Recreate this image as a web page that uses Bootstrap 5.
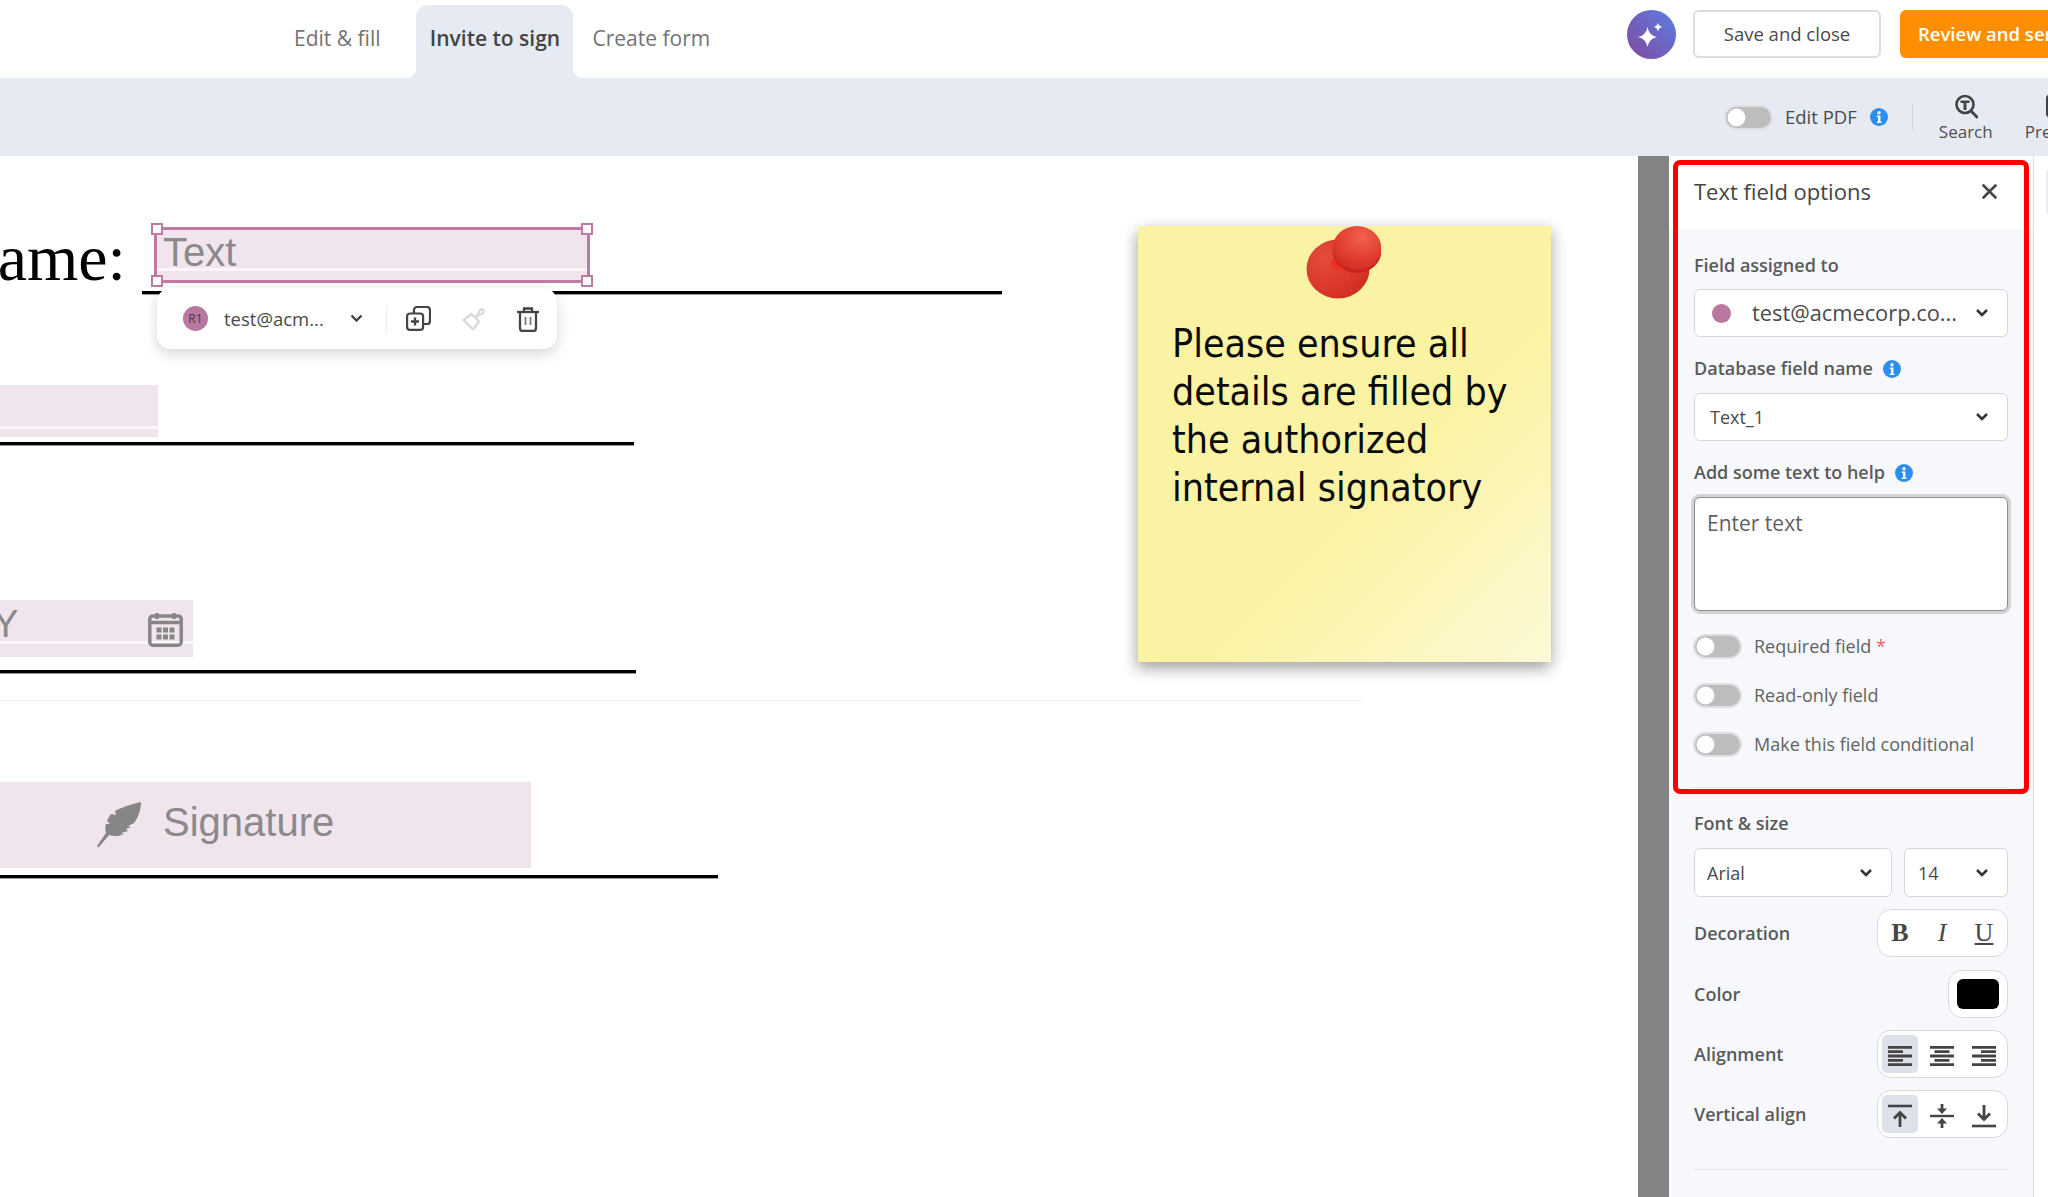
<!DOCTYPE html>
<html lang="en">
<head>
  <meta charset="UTF-8">
  <meta name="viewport" content="width=device-width, initial-scale=1">
  <title>Text field options</title>
  <link href="https://cdn.jsdelivr.net/npm/bootstrap@5.3.0/dist/css/bootstrap.min.css" rel="stylesheet">
  <style>
    body { font-family: "Open Sans", sans-serif; color: #4a4a4a; background: #fff; }
    .app { width: 2048px; height: 1197px; overflow: hidden; }

    /* top bar */
    .topbar { height: 78px; padding-left: 282px; flex-shrink: 0; }
    .doc-tabs { height: 73px; margin-top: 5px; }
    .doc-tabs .nav-link { font-size: 21px; color: #737373; padding: 0 12px; height: 73px; line-height: 66px; position: relative; }
    .doc-tabs .tab-active { color: #444; font-weight: 600; background: #e6eaf2; border-radius: 12px 12px 0 0; width: 157px; text-align: center; padding: 0; margin: 0 7px 0 24px; white-space: nowrap; }
    .doc-tabs .tab-active::before,
    .doc-tabs .tab-active::after { content: ""; position: absolute; bottom: 0; width: 10px; height: 10px; }
    .doc-tabs .tab-active::before { left: -10px; background: radial-gradient(circle at 0 0, transparent 10px, #e6eaf2 10.5px); }
    .doc-tabs .tab-active::after { right: -10px; background: radial-gradient(circle at 100% 0, transparent 10px, #e6eaf2 10.5px); }
    .top-actions { padding-bottom: 10px; }
    .ai-btn { width: 49px; height: 49px; flex-shrink: 0; }
    .btn-save { width: 188px; height: 48px; margin-left: 17px; font-size: 18.5px; font-weight: 500; color: #4a4a4a; background: #fff; border: 2px solid #dcdcdc; border-radius: 6px; padding: 0; }
    .btn-review { width: 180px; height: 48px; margin: 0 -32px 0 19px; font-size: 18.5px; font-weight: 600; color: #fff; background: #ff8f00; border: 0; border-radius: 6px; padding: 0 0 0 18px; flex-shrink: 0; text-align: left; white-space: nowrap; }

    /* tool strip */
    .toolstrip { height: 78px; background: #e6eaf2; padding-left: 1725px; flex-shrink: 0; }
    .toolstrip > * { flex-shrink: 0; }
    .edit-pdf { font-size: 18.5px; font-weight: 500; color: #4a4a4a; margin-left: 12px; white-space: nowrap; }
    .toolstrip .info-icon { margin-left: 13px; }
    .strip-sep { width: 1px; height: 26px; background: #d0d4dc; margin: 0 26px 0 24px; }
    .strip-item { font-size: 17px; font-weight: 500; color: #4f4f4f; line-height: 20px; width: 54px; margin-top: 2px; white-space: nowrap; }
    .strip-item svg { display: block; margin: 0 auto 3px; }
    .strip-cut { margin-left: 32px; }
    .strip-cut svg { margin-left: 21px; }

    /* switches */
    .form-switch .form-check-input { width: 49px; height: 25px; margin: 0 0 0 -1px; background-color: #bdbdbd; border: 2px solid #dedfe2; cursor: pointer; flex-shrink: 0;
      background-image: url("data:image/svg+xml,%3csvg xmlns='http://www.w3.org/2000/svg' viewBox='-4 -4 8 8'%3e%3ccircle r='3.4' fill='%23fff'/%3e%3c/svg%3e"); }
    .form-switch { padding-left: 0; min-height: 25px; margin: 0; }

    /* pdf canvas */
    .canvas { width: 1638px; height: 1041px; overflow: hidden; position: relative; flex-shrink: 0; }
    .pdf-text { position: absolute; left: -50px; top: 69px; font: 66px/1 "Liberation Serif", serif; color: #000; white-space: nowrap; }
    .pdf-line { position: absolute; height: 4px; background: #000; border-bottom: 1px solid #9a9a9a; }
    .line-1 { left: 142px; top: 135px; width: 860px; }
    .line-2 { left: 0; top: 286px; width: 634px; }
    .line-3 { left: 0; top: 514px; width: 636px; }
    .line-4 { left: 0; top: 719px; width: 718px; }
    .page-rule { position: absolute; left: 0; top: 544px; width: 1363px; height: 1px; background: #efefef; }
    .field { position: absolute; background: #f1e5ed; font-family: "Liberation Sans", sans-serif; color: #8c898b; }
    .field .strip { position: absolute; left: 0; right: 0; height: 3px; background: #fbf6f9; }
    .field-text { left: 154px; top: 71px; width: 436px; height: 56px; border: 3px solid #c07ba4; font-size: 40px; line-height: 44px; padding-left: 6px; }
    .field-text .strip { bottom: 9px; }
    .field-2 { left: 0; top: 229px; width: 158px; height: 52px; }
    .field-2 .strip { bottom: 8px; }
    .field-date { left: 0; top: 444px; width: 193px; height: 57px; font-size: 38px; line-height: 38px; padding-top: 5px; }
    .field-date .strip { bottom: 13px; }
    .field-date .year { display: block; margin-left: -7px; }
    .field-date svg { position: absolute; left: 148px; top: 12px; }
    .field-sign { left: 0; top: 626px; width: 531px; height: 86px; font-size: 40px; line-height: 80px; padding-left: 163px; }
    .field-sign svg { position: absolute; left: 97px; top: 20px; }
    .handle { position: absolute; width: 12px; height: 12px; background: #fff; border: 2.5px solid #c07ba4; }
    .h-tl { left: -6px; top: -7px; } .h-tr { right: -6px; top: -7px; }
    .h-bl { left: -6px; bottom: -7px; } .h-br { right: -6px; bottom: -7px; }
    .field-menu { position: absolute; left: 157px; top: 132px; width: 400px; height: 61px; padding-left: 26px; background: #fff; border-radius: 14px; box-shadow: 0 5px 14px rgba(0,0,0,.16); font-size: 18.5px; font-weight: 500; color: #4a4a4a; }
    .avatar { width: 25px; height: 25px; border-radius: 50%; background: #b9789f; font-size: 12px; color: #4a3542; line-height: 25px; text-align: center; }
    .menu-mail { width: 106px; margin-left: 16px; white-space: nowrap; }
    .menu-chev { margin-left: 20px; }
    .menu-sep { width: 1px; height: 26px; background: #ececec; margin: 0 19px 0 23px; }
    .menu-icon { margin-right: 31px; }
    .menu-trash { margin-left: -1px; }
    .sticky { position: absolute; left: 1138px; top: 70px; width: 413px; height: 436px; padding: 94px 20px 0 34px; background: linear-gradient(135deg, #fbf3a4 0%, #fbf3a4 60%, #fcf9d6 100%); box-shadow: -2px 7px 14px rgba(0,0,0,.3), 5px 2px 14px rgba(0,0,0,.1); font: 39px/48px "DejaVu Sans Condensed", "DejaVu Sans", sans-serif; color: #0b0b06; }
    .sticky svg { position: absolute; left: 167px; top: 0; }

    /* side panel */
    .gray-strip { width: 31px; background: #838383; flex-shrink: 0; }
    .side-panel { width: 365px; flex-shrink: 0; background: #f6f8fb; border-right: 1px solid #dcdde0; position: relative; }
    .panel-head { height: 73px; background: #fff; padding: 0 36px 2px 25px; }
    .panel-title { font-size: 22px; font-weight: 500; color: #444; margin: 0; }
    .panel-body { padding: 0 25px; }
    .lbl { display: block; font-size: 18px; font-weight: 600; color: #5a5a5a; line-height: 24px; margin: 0; }
    .lbl .info-icon { margin-left: 5px; vertical-align: -3px; }
    .form-select.fld { height: 48px; font-size: 18px; font-weight: 500; color: #4a4a4a; border: 1px solid #d5d7db; border-radius: 6px; padding: 0 36px 0 15px; line-height: 46px; background-position: right 18px center; background-size: 14px 10px;
      background-image: url("data:image/svg+xml,%3csvg xmlns='http://www.w3.org/2000/svg' viewBox='0 0 14 10'%3e%3cpath fill='none' stroke='%23333' stroke-width='2.6' d='M2 2l5 5 5-5'/%3e%3c/svg%3e"); }
    .form-select.assign { font-size: 21.8px; padding-left: 17px; padding-right: 30px; gap: 21px; white-space: nowrap; }
    .assign .dot { width: 19px; height: 19px; border-radius: 50%; background: #b9789f; flex-shrink: 0; }
    .form-select.arial { width: 198px; flex: none; padding-left: 12px; height: 49px; }
    .form-select.size { width: 104px; flex: none; padding-left: 13px; height: 49px; }
    .form-control.help { height: 114px; font-size: 21px; color: #555; border: 1px solid #8d8d8d; border-radius: 6px; padding: 10px 12px; box-shadow: 0 0 0 3px #d2d3d6; resize: none; background: #fff; }
    .form-control.help::placeholder { color: #5f5f5f; opacity: 1; }
    .sw-label { font-size: 18px; color: #636363; margin-left: 12px; line-height: 25px; }
    .req { color: #f0625f; }
    .side-rule { height: 1px; background: #e4e6ea; }
    .tool-group { width: 131px; height: 48px; background: #fff; border: 1px solid #d8dade; border-radius: 14px; padding: 0 4px; gap: 6px; }
    .tool-btn { width: 36px; height: 38px; padding: 0; border: 0; border-radius: 5px; color: #474747; background: transparent; font: 26px/38px "Liberation Serif", serif; }
    .tool-btn.on { background: #dde1ea; }
    .color-box { width: 60px; height: 48px; background: #fff; border: 1px solid #d8dade; border-radius: 14px; }
    .color-box span { width: 42px; height: 30px; background: #000; border-radius: 6px; }
    .mt-12 { margin-top: 12px; } .mt-13 { margin-top: 13px; } .mt-19 { margin-top: 19px; } .mt-23 { margin-top: 23px; } .mt-24 { margin-top: 24px; } .mt-30 { margin-top: 30px; } .mt-31 { margin-top: 31px; }
    .red-frame { position: absolute; left: 4px; top: 4px; width: 356px; height: 634px; border: 5px solid #ff0000; border-radius: 7px; pointer-events: none; }
    .rail { flex: 1; position: relative; }
    .rail::before { content: ""; position: absolute; left: 12px; top: 14px; width: 6px; height: 44px; background: #eceef2; border-radius: 4px; }
  </style>
</head>
<body>
  <div class="app d-flex flex-column">
    <!-- top bar -->
    <header class="topbar d-flex align-items-center">
      <ul class="nav doc-tabs align-self-start">
        <li class="nav-item"><a class="nav-link" href="#">Edit &amp; fill</a></li>
        <li class="nav-item"><a class="nav-link tab-active" href="#">Invite to sign</a></li>
        <li class="nav-item"><a class="nav-link" href="#">Create form</a></li>
      </ul>
      <div class="top-actions ms-auto d-flex align-items-center">
        <svg class="ai-btn" viewBox="0 0 49 49">
          <defs><linearGradient id="aiGrad" x1="0" y1="1" x2="1" y2="0"><stop offset="0" stop-color="#83499f"/><stop offset="1" stop-color="#5a7de4"/></linearGradient></defs>
          <circle cx="24.500" cy="24.500" r="24.500" fill="url(#aiGrad)"/>
          <path d="M20.500 17Q22 25.500 30 27Q22 28.500 20.500 37Q19 28.500 11 27Q19 25.500 20.500 17Z" fill="#fff"/>
          <path d="M31 12.500Q31.700 16.300 35.500 17Q31.700 17.700 31 21.500Q30.300 17.700 26.500 17Q30.300 16.300 31 12.500Z" fill="#fff"/>
        </svg>
        <button class="btn btn-save" type="button">Save and close</button>
        <button class="btn btn-review" type="button">Review and send</button>
      </div>
    </header>

    <!-- tool strip -->
    <div class="toolstrip d-flex align-items-center">
      <div class="form-check form-switch"><input class="form-check-input" type="checkbox" role="switch" aria-label="Edit PDF"></div>
      <span class="edit-pdf">Edit PDF</span>
      <svg class="info-icon" width="18" height="18" viewBox="0 0 18 18"><circle cx="9" cy="9" r="9" fill="#2b8ef0"/><circle cx="9" cy="4.800" r="1.700" fill="#fff"/><path d="M6.800 7.500h3.600v6h1v1.500H6.800v-1.500h1.200v-4.500H6.800z" fill="#fff"/></svg>
      <span class="strip-sep"></span>
      <div class="strip-item text-center">
        <svg width="24" height="25" viewBox="0 0 24 25"><circle cx="11" cy="10.500" r="8.500" fill="none" stroke="#444" stroke-width="2.600"/><path d="M6.500 6.500h9v2.600h-3V16h-3V9.100h-3z" fill="#444"/><path d="M17 17l6 6" stroke="#444" stroke-width="3" stroke-linecap="round"/></svg>
        Search
      </div>
      <div class="strip-item strip-cut">
        <svg width="24" height="25" viewBox="0 0 24 25"><rect x="1.200" y="2" width="16" height="20" rx="2" fill="none" stroke="#444" stroke-width="2.400"/></svg>
        Preview
      </div>
    </div>

    <main class="d-flex flex-grow-1">
      <!-- pdf page -->
      <div class="canvas">
        <div class="pdf-text">Name:</div>
        <div class="pdf-line line-1"></div>
        <div class="pdf-line line-2"></div>
        <div class="pdf-line line-3"></div>
        <div class="pdf-line line-4"></div>
        <div class="page-rule"></div>

        <div class="field field-text">
          Text<span class="strip"></span>
          <i class="handle h-tl"></i><i class="handle h-tr"></i><i class="handle h-bl"></i><i class="handle h-br"></i>
        </div>
        <div class="field field-2"><span class="strip"></span></div>
        <div class="field field-date">
          <span class="year">Y</span><span class="strip"></span>
          <svg width="35" height="35" viewBox="0 0 35 35"><rect x="1.800" y="4" width="31.400" height="29.200" rx="3" fill="none" stroke="#868686" stroke-width="3.500"/><path d="M2 10.500h31" stroke="#868686" stroke-width="3.500"/><path d="M9 1v6M26 1v6" stroke="#868686" stroke-width="3.500"/><path d="M8.500 15.500h5v5h-5zM15 15.500h5v5h-5zM21.500 15.500h5v5h-5zM8.500 22.500h5v5h-5zM15 22.500h5v5h-5zM21.500 22.500h5v5h-5z" fill="#868686"/></svg>
        </div>
        <div class="field field-sign">
          <svg width="45" height="46" viewBox="0 0 45 46"><path d="M44 0C35 2 25 5 18 9l1 4-5-1c-2 2-3 5-4 7l3 3-4 0c-1 3-1 6 0 9L0 44l1.500 1.500L12 33c5 2 11 1 15-1l-3-1 7-2-2-2 5-2-3-1 6-3C41 16 44 8 44 0Z" fill="#868686"/></svg>
          Signature
        </div>

        <div class="field-menu d-flex align-items-center">
          <span class="avatar">R1</span>
          <span class="menu-mail">test@acm...</span>
          <svg class="menu-chev" width="13" height="9" viewBox="0 0 13 9"><path d="M1.500 1.500l5 5 5-5" fill="none" stroke="#444" stroke-width="2.400"/></svg>
          <span class="menu-sep"></span>
          <svg class="menu-icon" width="25" height="25" viewBox="0 0 25 25"><path d="M8 7V4a3 3 0 0 1 3-3h10a3 3 0 0 1 3 3v11a3 3 0 0 1-3 3h-4" fill="none" stroke="#444" stroke-width="2.200"/><rect x="1.100" y="7.500" width="16" height="16.400" rx="3" fill="none" stroke="#444" stroke-width="2.200"/><path d="M9 11.500v8M5 15.500h8" stroke="#444" stroke-width="2.400"/></svg>
          <svg class="menu-icon" width="24" height="24" viewBox="0 0 24 24"><g fill="none" stroke="#d9d9d9" stroke-width="2.200" stroke-linejoin="round"><path d="M14 9l2-2 2-4a2.100 2.100 0 0 1 3 3l-4 2-2 2z"/><path d="M9.500 7l7.500 7.500-6 8-9.500-9.500z"/></g></svg>
          <svg class="menu-trash" width="24" height="26" viewBox="0 0 24 26"><g fill="none" stroke="#444" stroke-width="2.300"><path d="M1 6h22"/><path d="M8 6V2.500h8V6"/><path d="M4 6v16.500a2.500 2.500 0 0 0 2.500 2.500h11a2.500 2.500 0 0 0 2.500-2.500V6"/></g><path d="M9.500 11v8M14.500 11v8" stroke="#777" stroke-width="1.800"/></svg>
        </div>

        <div class="sticky">
          <svg width="76" height="76" viewBox="0 0 76 76">
            <defs>
              <radialGradient id="pinHead" cx=".6" cy=".25" r=".8"><stop offset="0" stop-color="#f2604f"/><stop offset=".6" stop-color="#e03f31"/><stop offset="1" stop-color="#cf2c22"/></radialGradient>
              <radialGradient id="pinBase" cx=".3" cy=".3" r=".85"><stop offset="0" stop-color="#e44c3a"/><stop offset=".7" stop-color="#d9352a"/><stop offset="1" stop-color="#c9271f"/></radialGradient>
            </defs>
            <ellipse cx="33" cy="43" rx="31.500" ry="29.500" fill="url(#pinBase)"/>
            <circle cx="32" cy="38" r="6" fill="#ee2f22"/>
            <ellipse cx="52" cy="25" rx="24.300" ry="22" fill="#c9241d"/>
            <ellipse cx="52" cy="22" rx="24.300" ry="22" fill="url(#pinHead)"/>
          </svg>
          Please ensure all details are filled by the authorized internal signatory
        </div>
      </div>

      <div class="gray-strip"></div>

      <!-- side panel -->
      <aside class="side-panel">
        <div class="panel-head d-flex align-items-center justify-content-between">
          <h2 class="panel-title">Text field options</h2>
          <svg width="15" height="15" viewBox="0 0 15 15"><path d="M1.500 1.500l12 12M13.500 1.500l-12 12" stroke="#444" stroke-width="2.600" stroke-linecap="round"/></svg>
        </div>
        <div class="panel-body">
          <label class="lbl mt-24">Field assigned to</label>
          <div class="form-select fld assign mt-12 d-flex align-items-center"><span class="dot"></span><span>test@acmecorp.co...</span></div>

          <label class="lbl mt-19">Database field name <svg class="info-icon" width="18" height="18" viewBox="0 0 18 18"><circle cx="9" cy="9" r="9" fill="#2b8ef0"/><circle cx="9" cy="4.800" r="1.700" fill="#fff"/><path d="M6.800 7.500h3.600v6h1v1.500H6.800v-1.500h1.200v-4.500H6.800z" fill="#fff"/></svg></label>
          <select class="form-select fld mt-13" aria-label="Database field name"><option>Text_1</option></select>

          <label class="lbl mt-19">Add some text to help <svg class="info-icon" width="18" height="18" viewBox="0 0 18 18"><circle cx="9" cy="9" r="9" fill="#2b8ef0"/><circle cx="9" cy="4.800" r="1.700" fill="#fff"/><path d="M6.800 7.500h3.600v6h1v1.500H6.800v-1.500h1.200v-4.500H6.800z" fill="#fff"/></svg></label>
          <textarea class="form-control help mt-13" placeholder="Enter text"></textarea>

          <div class="d-flex align-items-center form-switch mt-23"><input class="form-check-input" type="checkbox" role="switch" aria-label="Required field"><span class="sw-label">Required field <span class="req">*</span></span></div>
          <div class="d-flex align-items-center form-switch mt-24"><input class="form-check-input" type="checkbox" role="switch" aria-label="Read-only field"><span class="sw-label">Read-only field</span></div>
          <div class="d-flex align-items-center form-switch mt-24"><input class="form-check-input" type="checkbox" role="switch" aria-label="Make this field conditional"><span class="sw-label">Make this field conditional</span></div>

          <div class="side-rule mt-30"></div>

          <label class="lbl mt-23">Font &amp; size</label>
          <div class="d-flex justify-content-between mt-13">
            <select class="form-select fld arial" aria-label="Font"><option>Arial</option></select>
            <select class="form-select fld size" aria-label="Size"><option>14</option></select>
          </div>

          <div class="d-flex align-items-center justify-content-between mt-12">
            <span class="lbl">Decoration</span>
            <div class="tool-group d-flex align-items-center">
              <button class="tool-btn fw-bold" type="button">B</button>
              <button class="tool-btn fst-italic" type="button">I</button>
              <button class="tool-btn text-decoration-underline" type="button">U</button>
            </div>
          </div>

          <div class="d-flex align-items-center justify-content-between mt-13">
            <span class="lbl">Color</span>
            <div class="color-box d-flex align-items-center justify-content-center"><span></span></div>
          </div>

          <div class="d-flex align-items-center justify-content-between mt-12">
            <span class="lbl">Alignment</span>
            <div class="tool-group d-flex align-items-center">
              <button class="tool-btn on" type="button" aria-label="Left"><svg width="24" height="20" viewBox="0 0 24 20" fill="#444"><path d="M0 0h24v2.800H0zM0 4.300h15v2.800H0zM0 8.600h24v2.800H0zM0 12.900h15v2.800H0zM0 17.200h24v2.800H0z"/></svg></button>
              <button class="tool-btn" type="button" aria-label="Center"><svg width="24" height="20" viewBox="0 0 24 20" fill="#444"><path d="M0 0h24v2.800H0zM4.500 4.300h15v2.800h-15zM0 8.600h24v2.800H0zM4.500 12.900h15v2.800h-15zM0 17.200h24v2.800H0z"/></svg></button>
              <button class="tool-btn" type="button" aria-label="Right"><svg width="24" height="20" viewBox="0 0 24 20" fill="#444"><path d="M0 0h24v2.800H0zM9 4.300h15v2.800H9zM0 8.600h24v2.800H0zM9 12.900h15v2.800H9zM0 17.200h24v2.800H0z"/></svg></button>
            </div>
          </div>

          <div class="d-flex align-items-center justify-content-between mt-12">
            <span class="lbl">Vertical align</span>
            <div class="tool-group d-flex align-items-center">
              <button class="tool-btn on" type="button" aria-label="Top"><svg width="24" height="24" viewBox="0 0 24 24"><path d="M0 2h24" stroke="#444" stroke-width="2.600"/><path d="M12 23V9M6 14.500L12 8.500l6 6" fill="none" stroke="#444" stroke-width="2.800"/></svg></button>
              <button class="tool-btn" type="button" aria-label="Middle"><svg width="24" height="24" viewBox="0 0 24 24"><path d="M0 12h24" stroke="#444" stroke-width="2.400"/><path d="M12 0v6M12 24v-6" stroke="#444" stroke-width="2.800"/><path d="M7 4.500h10l-5 5.500zM7 19.500h10l-5-5.500z" fill="#444"/></svg></button>
              <button class="tool-btn" type="button" aria-label="Bottom"><svg width="24" height="24" viewBox="0 0 24 24"><path d="M0 22h24" stroke="#444" stroke-width="2.600"/><path d="M12 1v14M6 9.500L12 15.500l6-6" fill="none" stroke="#444" stroke-width="2.800"/></svg></button>
            </div>
          </div>

          <div class="side-rule mt-31"></div>
        </div>
        <div class="red-frame"></div>
      </aside>
      <div class="rail"></div>
    </main>
  </div>
  <script src="https://cdn.jsdelivr.net/npm/bootstrap@5.3.0/dist/js/bootstrap.bundle.min.js"></script>
</body>
</html>
